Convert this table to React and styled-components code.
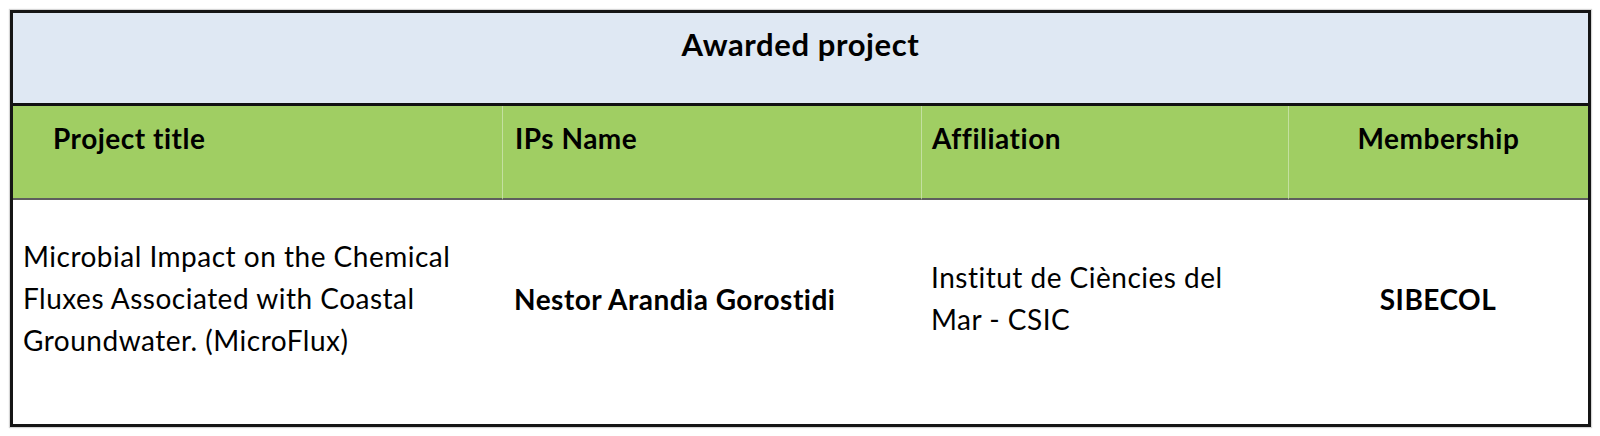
import styled, { createGlobalStyle } from "styled-components";

const GlobalStyle = createGlobalStyle`
  body {
    margin: 0;
    background: #ffffff;
    font-family: "Lato", "Liberation Sans", sans-serif;
    color: #000000;
  }
`;

const Page = styled.div`
  padding: 10px 9px 9px 10px;
`;

const Table = styled.div`
  border: 3px solid #151515;
  box-shadow: 0 0 1px 1px #d6d6d6;
  display: grid;
  grid-template-columns: 489px 419px 367px 1fr;
`;

const Banner = styled.div`
  grid-column: 1 / -1;
  height: 93px;
  box-sizing: border-box;
  background: #dfe8f3;
  border-bottom: 3px solid #111111;
  display: flex;
  align-items: center;
  justify-content: center;
  padding-bottom: 28px;
  font-weight: 700;
  font-size: 31px;
  letter-spacing: 0.6px;
`;

const HeadCell = styled.div`
  height: 94px;
  box-sizing: border-box;
  background: #a0ce63;
  border-bottom: 2px solid #5e5e5e;
  border-left: ${(p) => (p.first ? "none" : "1px solid #c4e0a0")};
  display: flex;
  align-items: center;
  justify-content: ${(p) => (p.center ? "center" : "flex-start")};
  padding-left: ${(p) => p.pad ?? 12}px;
  padding-bottom: 28px;
  font-weight: 700;
  font-size: 28px;
  letter-spacing: 0.5px;
`;

const BodyCell = styled.div`
  height: 224px;
  box-sizing: border-box;
  display: flex;
  align-items: center;
  justify-content: ${(p) => (p.center ? "center" : "flex-start")};
  padding-left: ${(p) => p.pad ?? 12}px;
  padding-bottom: ${(p) => p.lift || 0}px;
  font-size: 28px;
  letter-spacing: 0.5px;
  line-height: 42px;
  font-weight: ${(p) => (p.bold ? 700 : 400)};
`;

export default function App() {
  return (
    <>
      <GlobalStyle />
      <Page>
        <Table>
          <Banner>Awarded project</Banner>
          <HeadCell first pad={40}>Project title</HeadCell>
          <HeadCell>IPs Name</HeadCell>
          <HeadCell pad={10}>Affiliation</HeadCell>
          <HeadCell center pad={0}>Membership</HeadCell>
          <BodyCell pad={10} lift={28}>
            Microbial Impact on the Chemical
            <br />
            Fluxes Associated with Coastal
            <br />
            Groundwater. (MicroFlux)
          </BodyCell>
          <BodyCell bold lift={26}>Nestor Arandia Gorostidi</BodyCell>
          <BodyCell pad={10} lift={28}>
            Institut de Ciències del
            <br />
            Mar - CSIC
          </BodyCell>
          <BodyCell bold center pad={0} lift={26}>SIBECOL</BodyCell>
        </Table>
      </Page>
    </>
  );
}
